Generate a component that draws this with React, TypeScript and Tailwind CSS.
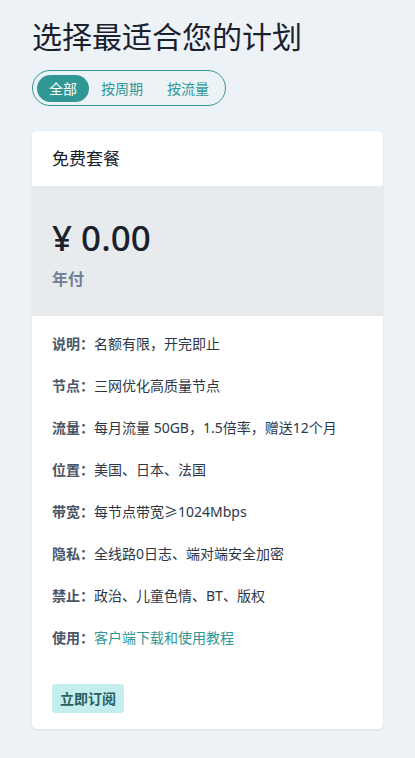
import React from 'react';

const rows = [
  { label: '说明', value: '名额有限，开完即止' },
  { label: '节点', value: '三网优化高质量节点' },
  { label: '流量', value: '每月流量 50GB，1.5倍率，赠送12个月' },
  { label: '位置', value: '美国、日本、法国' },
  { label: '带宽', value: '每节点带宽≥1024Mbps' },
  { label: '隐私', value: '全线路0日志、端对端安全加密' },
  { label: '禁止', value: '政治、儿童色情、BT、版权' },
  { label: '使用', value: '客户端下载和使用教程', link: true },
];

const tabs = ['全部', '按周期', '按流量'];

const App = () => {
  return (
    <div
      className="min-h-[758px] bg-[#edf2f7] px-[32px] pt-[17px] pb-[29px] text-[#1a202c]"
      style={{ fontFamily: '"Noto Sans", "Noto Sans CJK SC", sans-serif' }}
    >
      <h1 className="text-[30px] leading-[40px] font-normal">选择最适合您的计划</h1>

      <div className="mt-[13px] inline-flex items-center h-[36px] rounded-full border border-[#319795] px-[4px]">
        {tabs.map((t, i) => (
          <div
            key={t}
            className={
              i === 0
                ? 'h-[27px] px-[12px] rounded-full bg-[#319795] text-white text-[14px] flex items-center'
                : 'h-[27px] px-[12px] rounded-full text-[#319795] text-[14px] flex items-center'
            }
          >
            {t}
          </div>
        ))}
      </div>

      <div className="mt-[25px] bg-white rounded-[5px] shadow-[0_1px_3px_rgba(0,0,0,0.08)] overflow-hidden">
        <div className="h-[55px] px-[20px] flex items-center text-[17px]">免费套餐</div>

        <div className="h-[130px] bg-[#e8ebee] px-[20px] pt-[30px]">
          <div className="text-[35px] leading-[44px] font-medium text-[#1a202c]">¥ 0.00</div>
          <div className="mt-[9px] text-[16px] leading-[20px] font-bold text-[#718096]">年付</div>
        </div>

        <div className="px-[20px] pt-[17px] pb-[16px]">
          {rows.map((r) => (
            <div key={r.label} className="h-[42px] text-[14px] leading-[21px] text-[#2d3748]">
              <span className="font-bold text-[#4a5568]">{r.label}：</span>
              <span className={r.link ? 'text-[#319795]' : 'text-[#2d3748]'}>{r.value}</span>
            </div>
          ))}
          <button className="mt-[15px] h-[29px] px-[8px] rounded-[4px] bg-[#c4eeee] text-[#285e61] text-[14px] font-bold">
            立即订阅
          </button>
        </div>
      </div>
    </div>
  );
};

export default App;
